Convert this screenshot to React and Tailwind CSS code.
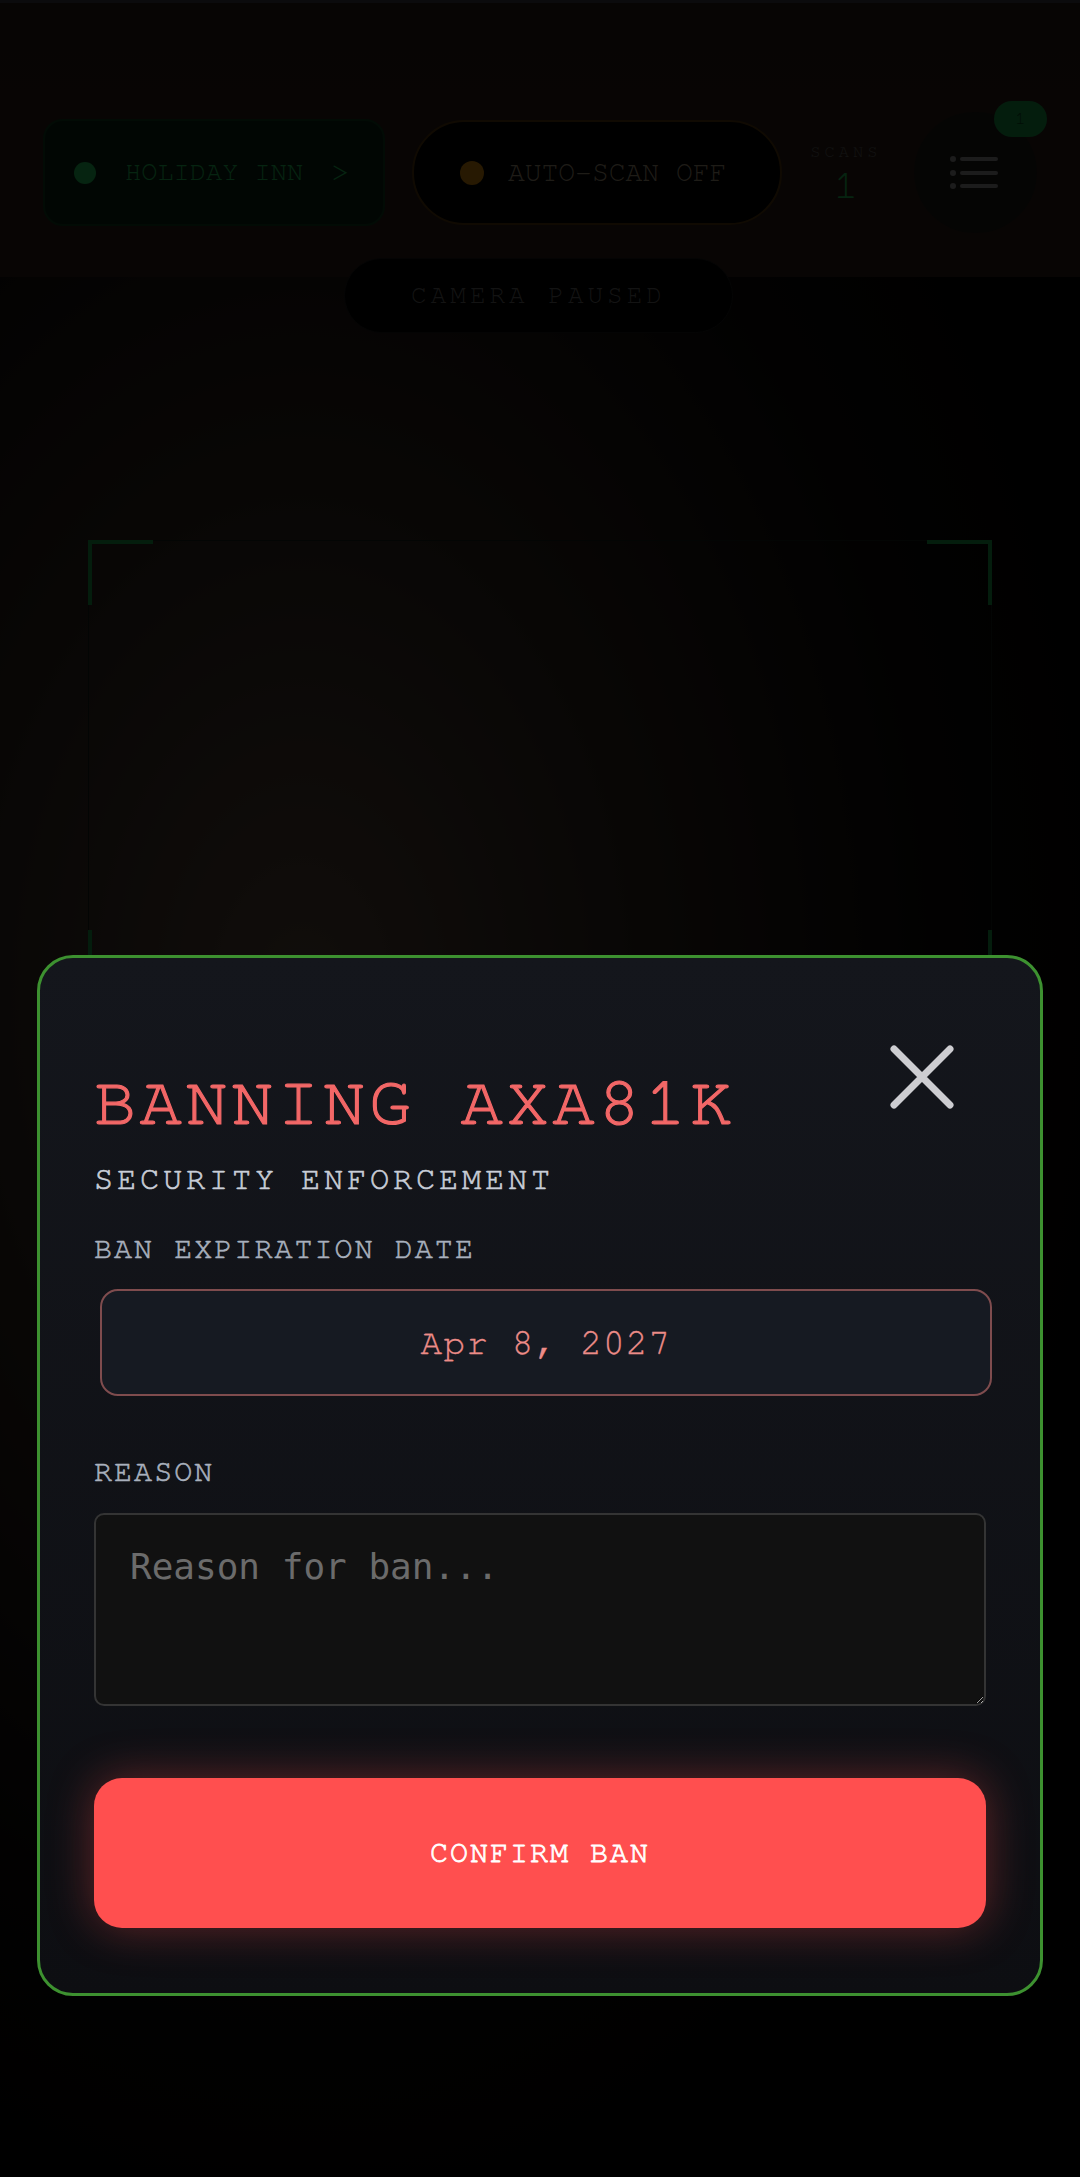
import React, { useState } from 'react';

const ScannerPage = () => {
    return (
        <div className="flex min-h-screen flex-col">

            {/* --- TOP BAR --- */}
            <div className="relative h-[277px] border-t-[3px] border-[#3c3c4c] bg-gradient-to-b from-[#2a2018] to-[#301f16] px-[43px] pt-[109px]">
                <div className="flex items-center">
                    <div className="flex h-[107px] w-[346px] items-center whitespace-nowrap rounded-[20px] border-2 border-[#0c3e20] bg-[#082614] px-[29px]">
                        <span className="h-[22px] w-[22px] shrink-0 rounded-full bg-[#22c55e]" />
                        <span className="ml-[29px] text-[27px] text-[#22c55e]">HOLIDAY INN</span>
                        <span className="ml-[28px] text-[30px] text-[#22c55e]">&gt;</span>
                    </div>
                    <div className="ml-[27px] flex h-[105px] w-[374px] items-center gap-[24px] whitespace-nowrap rounded-full border-2 border-[#5a3a10] bg-black px-[46px]">
                        <span className="h-[24px] w-[24px] shrink-0 rounded-full bg-[#d98a0b]" />
                        <span className="text-[28px] text-[#a89a80]">AUTO-SCAN OFF</span>
                    </div>
                    <div className="ml-[27px] flex w-[75px] flex-col items-center">
                        <span className="text-[17px] tracking-[4px] text-[#666666]">SCANS</span>
                        <span className="text-[42px] leading-[42px] text-[#22c55e]">1</span>
                    </div>
                    <div className="relative ml-[31px] flex h-[121px] w-[125px] items-center justify-center rounded-full bg-[#201c1a]">
                        <svg width="50" height="36" viewBox="0 0 50 36">
                            <circle cx="3" cy="4" r="3" fill="#999999" />
                            <circle cx="3" cy="18" r="3" fill="#999999" />
                            <circle cx="3" cy="31" r="3" fill="#999999" />
                            <rect x="10" y="2" width="38" height="4" rx="2" fill="#999999" />
                            <rect x="10" y="16" width="38" height="4" rx="2" fill="#999999" />
                            <rect x="10" y="29" width="38" height="4" rx="2" fill="#999999" />
                        </svg>
                        <span className="absolute -right-[10px] -top-[11px] flex h-[36px] w-[53px] items-center justify-center rounded-full bg-[#1a9e4c] text-[18px] text-[#064e1f]">1</span>
                    </div>
                </div>

                {/* Camera status badge */}
                <div className="absolute left-[344px] top-[255px] z-10 flex h-[75px] w-[389px] items-center justify-center rounded-full border border-[#1a1a1a] bg-black">
                    <span className="text-[26px] tracking-[4px] text-[#6a6a6a]">CAMERA PAUSED</span>
                </div>
            </div>

            {/* --- CAMERA VIEW --- */}
            <div className="flex-1 bg-[radial-gradient(ellipse_at_28%_38%,#5e4c3f_0%,#2e241e_32%,#0c0908_58%,#000000_82%)] px-[88px] pt-[263px]">
                <div className="relative h-[455px] border border-[#122018]">
                    <span className="absolute -left-px -top-px h-[65px] w-[65px] border-l-4 border-t-4 border-[#16a34a]" />
                    <span className="absolute -right-px -top-px h-[65px] w-[65px] border-r-4 border-t-4 border-[#16a34a]" />
                    <span className="absolute -bottom-px -left-px h-[65px] w-[65px] border-b-4 border-l-4 border-[#16a34a]" />
                    <span className="absolute -bottom-px -right-px h-[65px] w-[65px] border-b-4 border-r-4 border-[#16a34a]" />
                </div>
            </div>
        </div>
    );
};

const BanModal = () => {
    const [reason, setReason] = useState('');

    return (
        <div className="rounded-[36px] border-[3px] border-[#3d9130] bg-gradient-to-b from-[#14161c] to-[#0d0e12] px-[54px] pb-[65px] pt-[86px]">

            {/* Header */}
            <div className="flex items-start justify-between">
                <h2 className="mt-[24px] whitespace-nowrap text-[70px] leading-[70px] tracking-[3.85px] text-[#f26767] [-webkit-text-stroke:1.2px_#f26767]">BANNING AXA81K</h2>
                <button className="mr-[31px]">
                    <svg width="66" height="66" viewBox="0 0 66 66">
                        <path d="M5 5 L61 61 M61 5 L5 61" stroke="#cdcdd1" strokeWidth="7" strokeLinecap="round" fill="none" />
                    </svg>
                </button>
            </div>
            <p className="mt-[25px] text-[32px] leading-[32px] tracking-[3.8px] text-[#c9ced8] [-webkit-text-stroke:0.6px_#c9ced8]">SECURITY ENFORCEMENT</p>

            {/* Expiration */}
            <label className="mt-[39px] block text-[30px] leading-[30px] tracking-[2.05px] text-[#a8b0bd] [-webkit-text-stroke:0.6px_#a8b0bd]">BAN EXPIRATION DATE</label>
            <div className="ml-[6px] mt-[25px] flex h-[107px] w-full items-center justify-center rounded-[18px] border-2 border-[#7f4c4e] bg-[#161a22] text-[36px] leading-[36px] tracking-[1.2px] text-[#ec8c88] [-webkit-text-stroke:0.3px_#ec8c88]">
                Apr 8, 2027
            </div>

            {/* Reason */}
            <label className="mt-[61px] block text-[30px] leading-[30px] tracking-[2.05px] text-[#a8b0bd] [-webkit-text-stroke:0.6px_#a8b0bd]">REASON</label>
            <textarea
                value={reason}
                onChange={e => setReason(e.target.value)}
                placeholder="Reason for ban..."
                className="mt-[26px] block h-[193px] w-full rounded-[10px] border-2 border-[#343434] bg-[#111111] px-[34px] pt-[30px] font-['DejaVu_Sans_Mono',monospace] text-[36px] leading-[44px] text-[#dddddd] outline-none placeholder:text-[#6b6b6b]"
            />

            <button className="mt-[72px] flex h-[150px] w-full items-center justify-center rounded-[28px] bg-[#ff4f4f] text-[30px] leading-[30px] tracking-[2px] text-white shadow-[0_0_45px_rgba(255,79,79,0.35)] [-webkit-text-stroke:0.8px_#ffffff]">
                CONFIRM BAN
            </button>
        </div>
    );
};

const App = () => {
    return (
        <div className="relative min-h-screen overflow-hidden bg-black font-['FreeMono','Liberation_Mono',monospace]">
            <ScannerPage />

            {/* --- BAN OVERLAY --- */}
            <div className="absolute inset-0 z-20 flex flex-col justify-end bg-black/[0.82] px-[37px] pb-[181px]">
                <BanModal />
            </div>
        </div>
    );
};

export default App;
